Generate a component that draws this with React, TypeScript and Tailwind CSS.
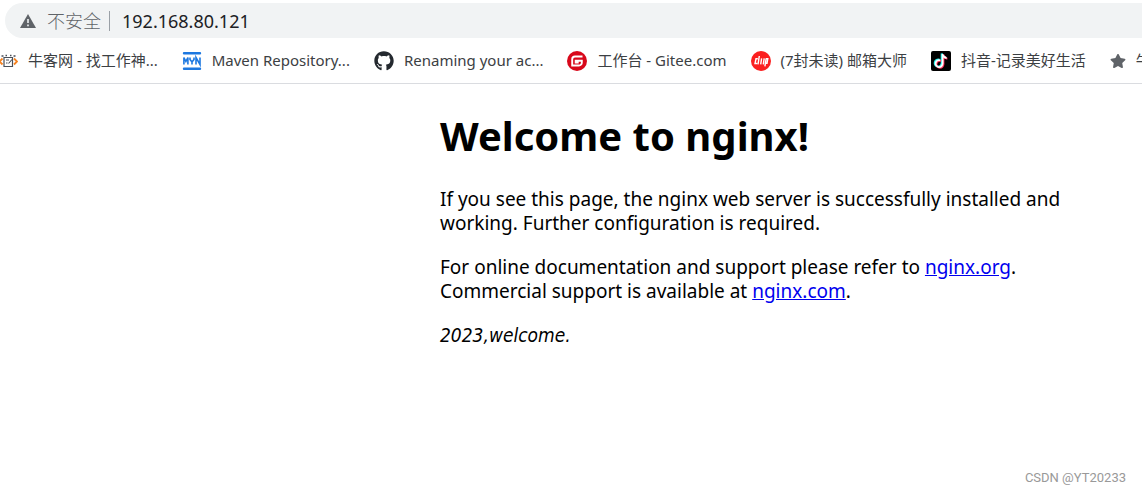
import type { ReactNode } from "react";
import { FaGithub, FaStar } from "react-icons/fa";

interface Bookmark {
  title: string;
  href: string;
  icon: ReactNode;
}

function NowcoderIcon() {
  return (
    <svg viewBox="0 0 20 20" className="size-5" fill="none">
      <path d="M6 6.500h8.500v9H6z" stroke="#4a4f58" strokeWidth="1.200" />
      <path d="M3.500 5h2M15.500 5h2M7.500 4.500h1.500M12 4.500h1.500" stroke="#4a4f58" strokeWidth="1.500" />
      <path d="M8 9h3M8 12h1.500M14 8.500l-3.500 4" stroke="#4a4f58" strokeWidth="1.100" />
      <path d="M4.500 7.500 1.500 10.500l3 3M16 7.500l3 3-3 3" stroke="#f58220" strokeWidth="1.800" />
    </svg>
  );
}

function MavenIcon() {
  return (
    <svg viewBox="0 0 20 20" className="size-5" fill="none" stroke="#1d78e0">
      <path d="M2 2.200h16M2 17.800h16" strokeWidth="2.400" strokeLinecap="round" />
      <path d="M1.900 13.500v-7l2 4 2-4v7M8 6.500v2l2 2.500 2-2.500v-2M10 11v2.500M14 13.500v-7l4 7v-7" strokeWidth="1.600" />
    </svg>
  );
}

function GiteeIcon() {
  return (
    <svg viewBox="0 0 20 20" className="size-5" fill="none">
      <circle cx="10" cy="10" r="10" fill="#d8081b" />
      <path d="M15.500 5.500H8a2.800 2.800 0 0 0-2.800 2.800v6.200H12a2.800 2.800 0 0 0 2.800-2.800V9.700H8.700v1.800h3" stroke="#fff" strokeWidth="1.900" />
    </svg>
  );
}

function MailMasterIcon() {
  return (
    <svg viewBox="0 0 20 20" className="size-5" fill="none">
      <circle cx="10" cy="10" r="10" fill="#fb1f1f" />
      <path
        d="M8.300 5 7 13.300M6.800 7.800H5L4 12.500h2.200M10.600 7.300l-.9 6M13.200 7.300l-.9 6M15 7.800h1.800l-.8 4.500h-1.800M15.200 7.300l-1.300 8"
        stroke="#fff"
        strokeWidth="1.400"
      />
    </svg>
  );
}

function DouyinIcon() {
  return (
    <svg viewBox="0 0 20 20" className="size-5" fill="none" strokeWidth="2">
      <rect width="20" height="20" rx="2" fill="#000" />
      <path d="M9.300 9.300a3.500 3.500 0 1 0 2.300 3.300V3c.3 2.300 1.800 3.700 4 4" stroke="#25f4ee" transform="translate(-.9 -.5)" />
      <path d="M9.300 9.300a3.500 3.500 0 1 0 2.300 3.300V3c.3 2.300 1.800 3.700 4 4" stroke="#fe2c55" transform="translate(.8 .7)" />
      <path d="M9.300 9.300a3.500 3.500 0 1 0 2.300 3.300V3c.3 2.300 1.800 3.700 4 4" stroke="#fff" strokeWidth="1.800" />
    </svg>
  );
}

const bookmarks: Bookmark[] = [
  { title: "牛客网 - 找工作神...", href: "#nowcoder", icon: <NowcoderIcon /> },
  { title: "Maven Repository...", href: "#maven", icon: <MavenIcon /> },
  { title: "Renaming your ac...", href: "#github", icon: <FaGithub className="size-5 text-[#24292f]" /> },
  { title: "工作台 - Gitee.com", href: "#gitee", icon: <GiteeIcon /> },
  { title: "(7封未读) 邮箱大师", href: "#mail", icon: <MailMasterIcon /> },
  { title: "抖音-记录美好生活", href: "#douyin", icon: <DouyinIcon /> },
  { title: "牛", href: "#starred", icon: <FaStar className="size-4 text-[#5f6368]" /> },
];

function AddressBar() {
  return (
    <div className="pt-[3px] pl-[5px]">
      <div className="flex h-[35px] items-center rounded-l-full bg-[#f1f3f4] pl-[15px] text-lg">
        <button type="button" className="flex items-center gap-[11px] text-[#5f6368]">
          <svg viewBox="0 0 16 14" className="h-[14px] w-4">
            <path d="M8 0 16 14H0z" fill="#5f6368" />
            <path d="M8 5v4M8 10.500v1.800" stroke="#f1f3f4" strokeWidth="1.600" />
          </svg>
          <span className="font-light">不安全</span>
        </button>
        <span className="mx-2 h-5 w-px bg-[#9aa0a6]" />
        <input
          type="text"
          aria-label="Address"
          defaultValue="192.168.80.121"
          className="min-w-0 flex-1 bg-transparent pl-1 text-[#202124] outline-none"
        />
      </div>
    </div>
  );
}

function BookmarksBar() {
  return (
    <nav className="-ml-[2px] flex h-[46px] items-center gap-6 overflow-hidden border-b border-[#dadce0] text-[15px] text-[#3c4043]">
      {bookmarks.map((b) => (
        <a key={b.href} href={b.href} className="flex shrink-0 items-center gap-[10px] whitespace-nowrap">
          {b.icon}
          <span>{b.title}</span>
        </a>
      ))}
    </nav>
  );
}

export default function App() {
  return (
    <div className="flex min-h-screen flex-col overflow-hidden bg-white font-['Noto_Sans','Noto_Sans_CJK_SC',sans-serif]">
      <header>
        <AddressBar />
        <BookmarksBar />
      </header>

      <main className="ml-[440px] max-w-[700px] flex-1 pt-7 text-[19px] leading-6 text-black">
        <h1 className="text-[40px] leading-[48px] font-bold">Welcome to nginx!</h1>
        <p className="mt-[27px]">
          If you see this page, the nginx web server is successfully installed and
          <br />
          working. Further configuration is required.
        </p>
        <p className="mt-5">
          For online documentation and support please refer to{" "}
          <a href="#nginx-org" className="text-[#0000ee] underline">nginx.org</a>.
          <br />
          Commercial support is available at{" "}
          <a href="#nginx-com" className="text-[#0000ee] underline">nginx.com</a>.
        </p>
        <p className="mt-5">
          <em className="font-['DejaVu_Sans_Condensed','Noto_Sans',sans-serif]">2023,welcome.</em>
        </p>
      </main>

      <footer className="pr-4 pb-1 text-right font-['Roboto',sans-serif] text-[13px] leading-5 text-[#999999]">
        CSDN @YT20233
      </footer>
    </div>
  );
}
